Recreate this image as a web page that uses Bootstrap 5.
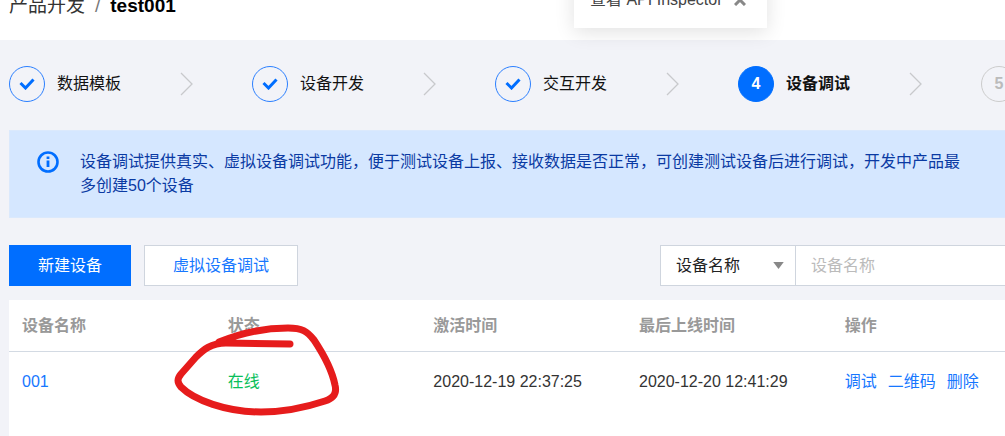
<!DOCTYPE html>
<html lang="zh-CN">
<head>
<meta charset="utf-8">
<meta name="viewport" content="width=device-width, initial-scale=1">
<title>设备调试</title>
<link href="https://cdn.jsdelivr.net/npm/bootstrap@5.3.0/dist/css/bootstrap.min.css" rel="stylesheet">
<style>
  body { font: 16px/24px "Liberation Sans", "Noto Sans CJK SC", sans-serif; background: #fff; color: #222; overflow-x: hidden; }
  a { text-decoration: none; color: #1677ff; }
  .topbar { height: 40px; }
  .crumbs { font-size: 19px; margin: -6px 0 0 9px; }
  .crumbs .breadcrumb-item + .breadcrumb-item { padding-left: 10px; }
  .crumbs .breadcrumb-item + .breadcrumb-item::before { padding-right: 10px; color: #777; font-weight: 400; }
  .crumbs a { color: #333; }
  .crumbs .active { color: #000; }
  .inspector { position: absolute; top: -28px; left: 574px; width: 193px; height: 56px; padding: 15px 16px; background: #fff; color: #444; box-shadow: 0 4px 20px rgba(0,0,0,.12); z-index: 2; line-height: 24px; gap: 11px; }
  .inspector button { border: 0; background: none; padding: 0; line-height: 0; color: #888; }
  .workspace { background: #f2f3f8; padding: 26px 0 0 9px; min-height: calc(100vh - 40px); }
  .steps { list-style: none; }
  .step { flex: 0 0 243px; color: #111; }
  .step-dot { width: 36px; height: 36px; border: 1px solid #2b7fff; border-radius: 50%; color: #006eff; font-weight: 700; flex: none; }
  .step.current .step-dot { background: #006eff; color: #fff; border-color: #006eff; }
  .step.waiting .step-dot { border-color: #ccc; color: #bbb; }
  .step-arrow { margin-left: auto; margin-right: 59px; }
  .tip { margin-top: 28px; padding: 19px 32px 19px 27px; background: #d5e7ff; border: 1px solid #dbe9fc; border-right: 0; border-radius: 0; color: #0a3aa3; gap: 21px; }
  .tip svg { margin-top: 1px; flex: none; }
  .actions { margin-top: 27px; }
  .toolset { gap: 13px; }
  .btn-tool { height: 41px; padding: 0 28px; border-radius: 0; font-size: 16px; line-height: 24px; border: 1px solid #cfd5de; background: #fff; color: #1677ff; }
  .btn-tool.primary { background: #006eff; border-color: #006eff; color: #fff; }
  .filter { flex: 0 0 345px; }
  .filter .form-select, .filter .form-control { height: 41px; border-radius: 0; border-color: #cfd5de; font-size: 16px; line-height: 24px; padding: 0 15px; color: #222; }
  .filter .form-select { flex: 0 0 136px; background-image: url("data:image/svg+xml,%3Csvg xmlns='http://www.w3.org/2000/svg' viewBox='0 0 12 8'%3E%3Cpath d='M0 0h12L6 8z' fill='%23888'/%3E%3C/svg%3E"); background-size: 11px 7px; background-position: right 11px center; }
  .filter .form-control { border-right: 0; }
  .filter .form-control::placeholder { color: #bbb; }
  .panel { margin-top: 14px; background: #fff; min-height: 136px; }
  .devices { table-layout: fixed; margin: 0; }
  .devices th, .devices td { padding: 14px 0 13px 13px; vertical-align: middle; }
  .devices th { width: 20.65%; color: #999; border-bottom: 1px solid #d3dae3; }
  .devices th:last-child { width: auto; }
  .devices td { border: 0; padding-top: 18px; color: #333; }
  .devices td.status { position: relative; color: #0abf5b; }
  .devices .ops { gap: 11px; }
  .devices a { color: #1677ff; }
  .pen { position: absolute; left: -46px; top: -36px; pointer-events: none; }
</style>
</head>
<body>
<header class="topbar position-relative">
  <div class="overflow-hidden">
    <nav aria-label="breadcrumb">
      <ol class="breadcrumb crumbs">
        <li class="breadcrumb-item"><a href="#">产品开发</a></li>
        <li class="breadcrumb-item active fw-bold" aria-current="page">test001</li>
      </ol>
    </nav>
  </div>
  <div class="inspector d-flex align-items-center"><span class="text-nowrap">查看 API Inspector</span>
    <button type="button" aria-label="关闭"><svg width="12" height="12" viewBox="0 0 12 12" stroke="currentColor" stroke-width="3"><path d="M1 1l10 10M11 1L1 11"/></svg></button>
  </div>
</header>

<main class="workspace">
  <ol class="steps d-flex overflow-hidden p-0 m-0">
    <li class="step d-flex align-items-center">
      <span class="step-dot d-flex align-items-center justify-content-center me-2"><svg width="16" height="12" viewBox="0 0 16 12" fill="none" stroke="currentColor" stroke-width="3"><path d="M1.500 5l5 5 8-8.500"/></svg></span>
      <span class="ps-1">数据模板</span>
      <svg class="step-arrow" width="13" height="24" viewBox="0 0 13 24" fill="none" stroke="#c8c9cc" stroke-width="1.300"><path d="M1 1l11 11L1 23"/></svg>
    </li>
    <li class="step d-flex align-items-center">
      <span class="step-dot d-flex align-items-center justify-content-center me-2"><svg width="16" height="12" viewBox="0 0 16 12" fill="none" stroke="currentColor" stroke-width="3"><path d="M1.500 5l5 5 8-8.500"/></svg></span>
      <span class="ps-1">设备开发</span>
      <svg class="step-arrow" width="13" height="24" viewBox="0 0 13 24" fill="none" stroke="#c8c9cc" stroke-width="1.300"><path d="M1 1l11 11L1 23"/></svg>
    </li>
    <li class="step d-flex align-items-center">
      <span class="step-dot d-flex align-items-center justify-content-center me-2"><svg width="16" height="12" viewBox="0 0 16 12" fill="none" stroke="currentColor" stroke-width="3"><path d="M1.500 5l5 5 8-8.500"/></svg></span>
      <span class="ps-1">交互开发</span>
      <svg class="step-arrow" width="13" height="24" viewBox="0 0 13 24" fill="none" stroke="#c8c9cc" stroke-width="1.300"><path d="M1 1l11 11L1 23"/></svg>
    </li>
    <li class="step current d-flex align-items-center" aria-current="step">
      <span class="step-dot d-flex align-items-center justify-content-center me-2">4</span>
      <span class="ps-1 fw-bold">设备调试</span>
      <svg class="step-arrow" width="13" height="24" viewBox="0 0 13 24" fill="none" stroke="#c8c9cc" stroke-width="1.300"><path d="M1 1l11 11L1 23"/></svg>
    </li>
    <li class="step waiting d-flex align-items-center">
      <span class="step-dot d-flex align-items-center justify-content-center">5</span>
    </li>
  </ol>

  <div class="tip alert d-flex mb-0" role="status">
    <svg width="22" height="22" viewBox="0 0 22 22" fill="none" stroke="#006eff"><circle cx="11" cy="11" r="9.500" stroke-width="2.600"/><path d="M11 5.500v2.500M11 9.500v6.500" stroke-width="2.800"/></svg>
    <div>设备调试提供真实、虚拟设备调试功能，便于测试设备上报、接收数据是否正常，可创建测试设备后进行调试，开发中产品最多创建50个设备</div>
  </div>

  <div class="actions d-flex justify-content-between">
    <div class="d-flex toolset">
      <button type="button" class="btn btn-tool primary">新建设备</button>
      <button type="button" class="btn btn-tool">虚拟设备调试</button>
    </div>
    <div class="filter input-group flex-nowrap">
      <select class="form-select" aria-label="筛选字段"><option>设备名称</option></select>
      <input class="form-control" type="text" placeholder="设备名称" aria-label="设备名称">
    </div>
  </div>

  <div class="panel">
    <table class="table devices">
      <thead>
        <tr><th scope="col">设备名称</th><th scope="col">状态</th><th scope="col">激活时间</th><th scope="col">最后上线时间</th><th scope="col">操作</th></tr>
      </thead>
      <tbody>
        <tr>
          <td><a href="#">001</a></td>
          <td class="status">在线
            <svg class="pen" width="180" height="110" viewBox="168 316 180 110" fill="none" stroke="#e61c1c" stroke-width="7" stroke-linecap="round" stroke-linejoin="round"><path d="M289 344L225 343C210 343 202 350 195 357L180 374C176 379 176 382 180 387C193 400 225 412 260 412C285 412 306 407 324 401C333 398 336 393 334 385C331 370 321 352 313 340C306 331 301 328 287 328C262 328 240 333 218 342"/></svg>
          </td>
          <td>2020-12-19 22:37:25</td>
          <td>2020-12-20 12:41:29</td>
          <td><div class="ops d-flex text-nowrap"><a href="#">调试</a><a href="#">二维码</a><a href="#">删除</a></div></td>
        </tr>
      </tbody>
    </table>
  </div>
</main>
<script src="https://cdn.jsdelivr.net/npm/bootstrap@5.3.0/dist/js/bootstrap.bundle.min.js"></script>
</body>
</html>
